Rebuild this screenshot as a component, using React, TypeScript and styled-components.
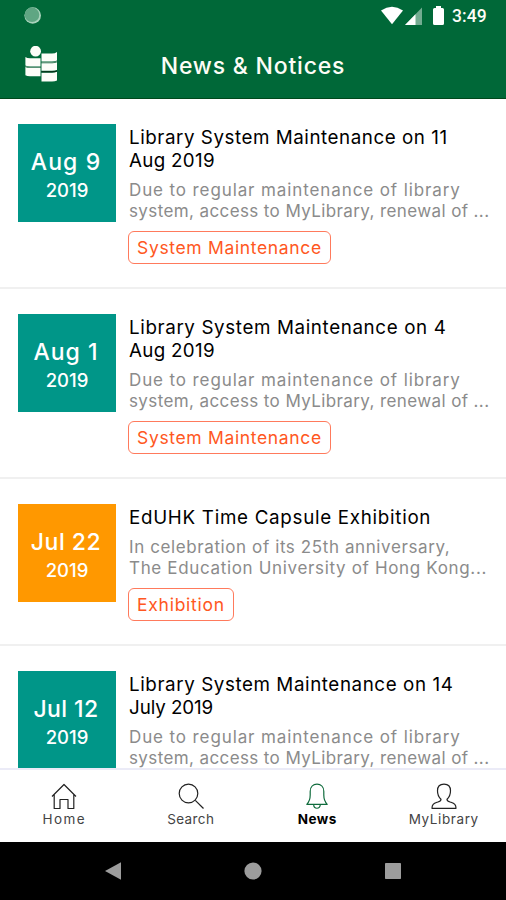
import React from "react";
import styled, { createGlobalStyle } from "styled-components";

const GlobalStyle = createGlobalStyle`
  * { box-sizing: border-box; }
  body { margin: 0; background: #fff; font-family: Inter, "Open Sans", sans-serif; }
`;

const Screen = styled.div`
  width: 506px;
  height: 900px;
  display: flex;
  flex-direction: column;
  overflow: hidden;
  background: #fff;
`;

const Header = styled.header`
  flex: none;
  height: 99px;
  background: #006838;
  border-bottom: 1px solid #00481c;
  color: #fdfdf6;
`;

const StatusBar = styled.div`
  height: 32px;
  padding: 0 18px 0 24px;
  display: flex;
  align-items: center;
  justify-content: space-between;
`;

const StatusIcons = styled.div`
  display: flex;
  align-items: center;
  svg { display: block; }
`;

const Clock = styled.span`
  width: 36px;
  margin-left: 8px;
  font: 500 17.5px/32px Roboto, sans-serif;
  letter-spacing: 0.1px;
`;

const TitleBar = styled.div`
  height: 66px;
  display: grid;
  grid-template-columns: 80px 1fr 80px;
  align-items: center;
`;

const LogoSlot = styled.div`
  padding-left: 24px;
  svg { display: block; }
`;

const PageTitle = styled.h1`
  margin: 2px 0 0;
  text-align: center;
  white-space: nowrap;
  font-size: 23px;
  font-weight: 500;
  line-height: 30px;
  letter-spacing: 0.8px;
`;

const NewsList = styled.main`
  flex: 1;
  min-height: 0;
  overflow: hidden;
`;

const NewsRow = styled.article`
  display: flex;
  gap: 13px;
  padding: 25px 0 23px 18px;
  border-bottom: 2px solid #f0f0f0;
`;

const DateTile = styled.div<{ $color: string }>`
  flex: none;
  width: 98px;
  height: 98px;
  padding-top: 23px;
  background: ${(p) => p.$color};
  color: #fff;
  text-align: center;
  font-weight: 500;
`;

const Day = styled.div<{ $track: number }>`
  font-size: 23px;
  line-height: 30px;
  letter-spacing: ${(p) => p.$track}px;
  padding-right: 2px;
`;

const Year = styled.div`
  font-size: 18.5px;
  line-height: 27px;
`;

const Body = styled.div`
  padding-top: 2px;
  white-space: nowrap;
`;

const Headline = styled.h2`
  margin: 0;
  font-size: 18.8px;
  line-height: 23px;
  font-weight: 400;
  color: #000;
`;

const Summary = styled.p`
  margin: 8px 0 9px;
  font-size: 17px;
  line-height: 21px;
  color: #8b8b8b;
`;

const Line = styled.span<{ $track: number }>`
  display: block;
  letter-spacing: ${(p) => p.$track}px;
`;

const Tag = styled.span<{ $track: number }>`
  display: block;
  width: max-content;
  height: 33px;
  margin-left: -1px;
  padding: 0 8px;
  border: 1px solid #ff7a5c;
  border-radius: 6px;
  font-size: 17.5px;
  line-height: 32px;
  letter-spacing: ${(p) => p.$track}px;
  color: #ff5722;
`;

const TabBar = styled.nav`
  flex: none;
  height: 74px;
  display: grid;
  grid-template-columns: repeat(4, 126.5px);
  padding-left: 1px;
  border-top: 2px solid #ebebf7;
  background: #fff;
`;

const Tab = styled.div<{ $active?: boolean; $track: number }>`
  display: flex;
  flex-direction: column;
  align-items: center;
  padding-top: 12px;
  font-size: 13.5px;
  line-height: 19px;
  font-weight: ${(p) => (p.$active ? 700 : 400)};
  color: ${(p) => (p.$active ? "#000" : "#444")};
  span { letter-spacing: ${(p) => p.$track}px; }
  svg {
    display: block;
    fill: none;
    stroke: ${(p) => (p.$active ? "#0f6b3c" : "#222")};
    stroke-width: 1.2;
    stroke-linejoin: round;
  }
`;

const SystemNav = styled.div`
  flex: none;
  height: 58px;
  display: grid;
  grid-template-columns: repeat(3, 140px);
  justify-content: center;
  justify-items: center;
  padding-top: 19px;
  background: #000;
  svg { display: block; fill: #9c9c9c; }
`;

type TextLine = [text: string, track: number];
interface NewsItem {
  color: string;
  day: TextLine;
  headline: TextLine[];
  summary: TextLine[];
  tag?: TextLine;
}

const TEAL = "#009688";
const maintenance: TextLine[] = [
  ["Due to regular maintenance of library", 0.89],
  ["system, access to MyLibrary, renewal of ...", 0.39],
];

const items: NewsItem[] = [
  {
    color: TEAL,
    day: ["Aug 9", 1.1],
    headline: [["Library System Maintenance on 11", 0.54], ["Aug 2019", 0.3]],
    summary: maintenance,
    tag: ["System Maintenance", 0.66],
  },
  {
    color: TEAL,
    day: ["Aug 1", 1],
    headline: [["Library System Maintenance on 4", 0.62], ["Aug 2019", 0.3]],
    summary: maintenance,
    tag: ["System Maintenance", 0.66],
  },
  {
    color: "#ff9800",
    day: ["Jul 22", 0.5],
    headline: [["EdUHK Time Capsule Exhibition", 0.7]],
    summary: [
      ["In celebration of its 25th anniversary,", 0.6],
      ["The Education University of Hong Kong...", 0.66],
    ],
    tag: ["Exhibition", 0.75],
  },
  {
    color: TEAL,
    day: ["Jul 12", 0.4],
    headline: [["Library System Maintenance on 14", 0.58], ["July 2019", -0.08]],
    summary: maintenance,
  },
];

const Lines = ({ lines }: { lines: TextLine[] }) => (
  <>
    {lines.map(([text, track]) => (
      <Line key={text} $track={track}>{text}</Line>
    ))}
  </>
);

const Logo = () => (
  <svg width="34" height="38" viewBox="0 0 34 38">
    <g fill="#fdfdf8">
      <circle cx="11.6" cy="5.2" r="5.4" />
      <path d="M1.4 11Q3 12.2 6 12.2H16.5V20.5H6Q3 20.5 1.4 19.6Z" />
      <path d="M1.4 21Q3 22 6 22H16.5V30.3H6Q3 30.3 1.4 29.3Z" />
      <path d="M17.5 7.5H28Q31 7.5 33 6V14.5Q31 15.5 28 15.5H17.5Z" />
      <path d="M17.5 17.3H28Q31 17.3 33 16.3V24Q31 24.8 28 24.8H17.5Z" />
      <path d="M17.5 26.8H28Q31 26.8 33 25.8V34.5Q31 35.6 28 35.6H17.5Z" />
    </g>
    <g fill="none">
      <path d="M1.4 20.3Q3 21.3 6 21.3H16.5" stroke="#6f9c83" />
      <path d="M17.5 16.4H28Q31 16.4 33 15.4" stroke="#6f9c83" />
      <path d="M17.5 25.8H28Q31 25.8 33 24.9" stroke="#06240f" />
    </g>
  </svg>
);

export default function App() {
  return (
    <Screen>
      <GlobalStyle />
      <Header>
        <StatusBar>
          <svg width="18" height="18" viewBox="0 0 18 18">
            <circle cx="8.7" cy="8.5" r="8.3" fill="#a9d3bc" />
            <circle cx="8" cy="7.8" r="7.3" fill="#5fa683" />
          </svg>
          <StatusIcons>
            <svg width="64" height="20" viewBox="0 0 64 20" fill="#fff">
              <path d="M1 4.4Q12 -3 23 4.4L12 18.3Z" />
              <path d="M42 1.5V19H25Z" opacity=".45" />
              <path d="M35.5 8.2V19H25Z" />
              <path d="M56 0h5v2h1.5q1.5 0 1.5 1.5v14q0 1.5-1.5 1.5h-8q-1.5 0-1.5-1.5v-14Q53 2 54.5 2H56z" />
            </svg>
            <Clock>3:49</Clock>
          </StatusIcons>
        </StatusBar>
        <TitleBar>
          <LogoSlot><Logo /></LogoSlot>
          <PageTitle>News &amp; Notices</PageTitle>
        </TitleBar>
      </Header>

      <NewsList>
        {items.map((item) => (
          <NewsRow key={item.day[0]}>
            <DateTile $color={item.color}>
              <Day $track={item.day[1]}>{item.day[0]}</Day>
              <Year>2019</Year>
            </DateTile>
            <Body>
              <Headline><Lines lines={item.headline} /></Headline>
              <Summary><Lines lines={item.summary} /></Summary>
              {item.tag && <Tag $track={item.tag[1]}>{item.tag[0]}</Tag>}
            </Body>
          </NewsRow>
        ))}
      </NewsList>

      <TabBar>
        <Tab $track={1.4}>
          <svg width="26" height="28" viewBox="0 0 26 28">
            <path d="M1 14.5L13 2.5L25 14.5M3.2 12.8V26.5H9V17.5H17V26.5H22.8V12.8" />
          </svg>
          <span>Home</span>
        </Tab>
        <Tab $track={0.4}>
          <svg width="26" height="28" viewBox="0 0 26 28">
            <circle cx="10.5" cy="11.5" r="9.3" />
            <path d="M17.3 18.3L25.5 26.5" />
          </svg>
          <span>Search</span>
        </Tab>
        <Tab $active $track={0.5}>
          <svg width="26" height="28" viewBox="0 0 26 28">
            <path d="M2.8 22.3C5.5 19.5 6.2 17 6.2 13V9.5C6.2 5 9 2.2 13 2.2S19.8 5 19.8 9.5V13C19.8 17 20.5 19.5 23.2 22.3ZM9.7 22.5C9.7 27.5 16.3 27.5 16.3 22.5" />
          </svg>
          <span>News</span>
        </Tab>
        <Tab $track={0.6}>
          <svg width="26" height="28" viewBox="0 0 26 28">
            <path d="M10 17.2C7.6 15.2 6.5 12 6.5 8.8C6.5 4.5 9 2.2 13 2.2S19.5 4.5 19.5 8.8C19.5 12 18.4 15.2 16 17.2C15.8 19.3 17.5 19.5 20 20.3C23.5 21.5 25 22.5 25 26.3H1C1 22.5 2.5 21.5 6 20.3C8.5 19.5 10.2 19.3 10 17.2Z" />
          </svg>
          <span>MyLibrary</span>
        </Tab>
      </TabBar>

      <SystemNav>
        <svg width="20" height="20" viewBox="0 0 20 20"><path d="M2 10L18 1.2V18.8Z" /></svg>
        <svg width="20" height="20" viewBox="0 0 20 20"><circle cx="10" cy="10" r="8.6" /></svg>
        <svg width="20" height="20" viewBox="0 0 20 20"><rect x="2" y="2" width="16" height="16" rx=".7" /></svg>
      </SystemNav>
    </Screen>
  );
}
